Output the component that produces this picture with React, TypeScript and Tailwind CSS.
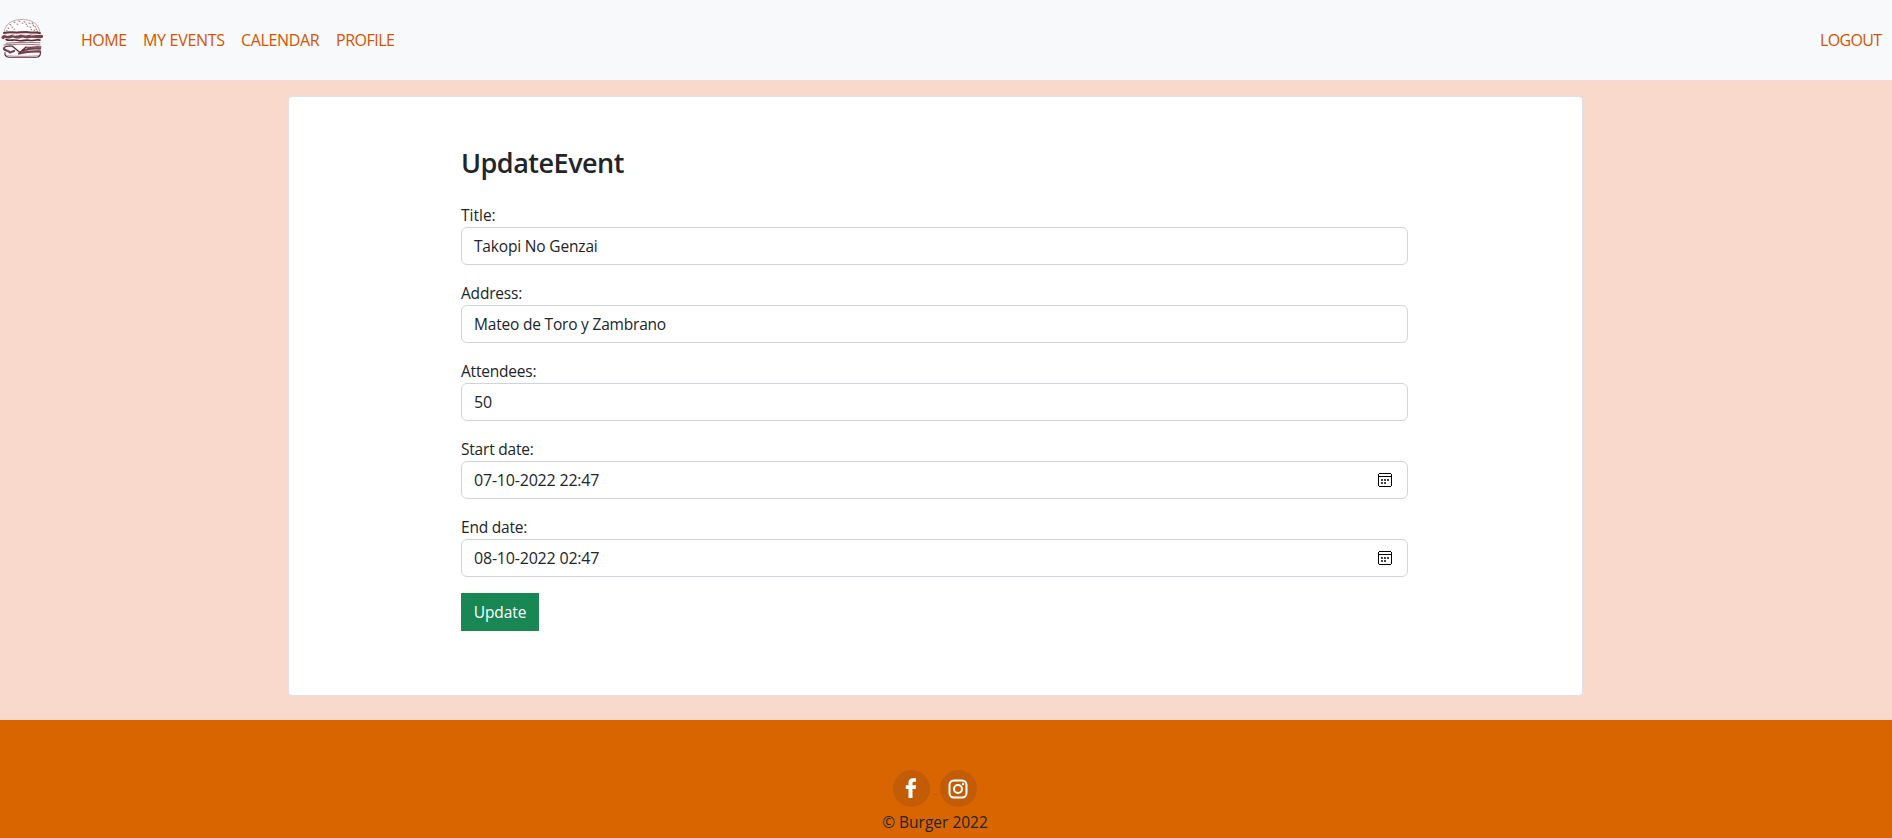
import React from "react";

const links = [
  { label: "HOME", box: "w-[62px]", text: "tracking-[-0.5px]" },
  { label: "MY EVENTS", box: "w-[98px]", text: "tracking-[-0.3px]" },
  { label: "CALENDAR", box: "w-[95px]", text: "tracking-[-0.35px]" },
  { label: "PROFILE", box: "w-[74px]", text: "tracking-[-0.5px]" },
];

const fields = [
  { label: "Title:", value: "Takopi No Genzai", labelText: "text-[15.5px]", valueText: "text-[15.5px] tracking-[-0.17px]", date: false },
  { label: "Address:", value: "Mateo de Toro y Zambrano", labelText: "text-[15.5px] tracking-[-0.2px]", valueText: "text-[15.5px] tracking-[-0.2px]", date: false },
  { label: "Attendees:", value: "50", labelText: "text-[15.5px] tracking-[-0.2px]", valueText: "tracking-[-0.2px]", date: false },
  { label: "Start date:", value: "07-10-2022 22:47", labelText: "text-[15.5px] tracking-[-0.2px]", valueText: "tracking-[-0.2px]", date: true },
  { label: "End date:", value: "08-10-2022 02:47", labelText: "text-[15.5px] tracking-[-0.2px]", valueText: "tracking-[-0.2px]", date: true },
];

function Burger() {
  return (
    <svg width="44" height="42" viewBox="0 0 44 42" fill="none" stroke="#5e2230" strokeLinecap="round">
      <path d="M4 14.500C5 6 12 1.500 22 1.500S39 6 40 14.500z" strokeWidth=".7" strokeOpacity=".55" fill="#fff" />
      <path d="M10 6.500l1 .5M14 4l1 .5M19 3l1 .4M24 3.500l1 .6M29 5l1 .6M33 7l.8.8M12 9l.8.3M17 6l.8.3M22 5l.8.3M27 8l.8.3M30 9l.8.4M36 11l.6.5M26 6l.6.4M8 10l.6.5M32 5l.8.5M35 8.500l.7.6M31 11.500l.7.3M37 13l.6.5M34 12l.6.4M14 11l.6.3M6.500 12.500l.6.4" strokeWidth="1.100" strokeOpacity=".6" />
      <path d="M4 15c5-1.500 9-.3 14-.6s9-.6 13 0 6-.4 9 .8" strokeWidth="2" strokeOpacity=".9" />
      <path d="M3 19.500c2-3 5 1 8-1s5 2 9 0 6 1.500 9 0 8 1 12.500 0" strokeWidth="3.200" strokeOpacity=".85" />
      <path d="M5 16.800l3 .6M13 17l3 .3M22 16.500l4 .6M31 17l4-.2" strokeWidth="1" stroke="#f2e6e8" />
      <path d="M6 21.500c4 2 7-.5 11 .8s9-.8 12 0 7-1 11-.2" strokeWidth="1.600" />
      <path d="M6 25.300c9-1 22-1.300 34-.5M4 27c10-1.200 24-1 36 0" strokeWidth=".8" strokeOpacity=".8" />
      <path d="M4 29.500c2-2 5-1 8-1.500l8 6.500 6-5.500c5 1 10-1 15 0" strokeWidth="1.200" />
      <path d="M4 31c2 2.500 4 1 6 3.500l4-1.500M23 32.500c5-2 11-2.500 17-2M19 35.500c8-2 14-2.500 21-2" strokeWidth="2.300" strokeOpacity=".85" />
      <path d="M5 34.500c-.5 3 1 4.500 4 4.700h27c3 0 4.500-2 4.500-4.700" strokeWidth="1.100" />
      <path d="M6.500 37.300c8 1.300 24 1.300 33 0" strokeWidth=".7" strokeOpacity=".5" />
    </svg>
  );
}

function CalendarIcon() {
  return (
    <svg width="14" height="14" viewBox="0 0 14 14" shapeRendering="crispEdges">
      <path fill="#000" d="M1 0h12v1H1zM0 1h1v12H0zM13 1h1v12h-1zM1 13h12v1H1zM1 3h12v1H1z" />
      <path fill="#444" d="M3 6h2v2H3zM6 6h2v2H6zM9 6h2v2H9zM3 9h2v2H3zM6 9h2v2H6z" />
    </svg>
  );
}

export default function App() {
  return (
    <div className="flex h-[838px] w-full flex-col overflow-hidden bg-[#f9d9cc] font-['Open_Sans','Noto_Sans',sans-serif] text-base leading-6 text-[#212529]">
      <header className="flex h-20 shrink-0 items-center bg-[#f8f9fb] pb-px text-[#d35400]">
        <div className="w-[81px] pb-px">
          <Burger />
        </div>
        <nav className="flex grow">
          {links.map((l) => (
            <a key={l.label} className={l.box + " whitespace-nowrap"}>
              <span className={l.text}>{l.label}</span>
            </a>
          ))}
        </nav>
        <a className="w-[72px] whitespace-nowrap tracking-[-0.65px]">LOGOUT</a>
      </header>

      <main className="h-[640px] shrink-0 pt-4">
        <section className="ml-[288px] h-[600px] w-[1295px] rounded border border-[#dee2e6] bg-white">
          <form className="ml-[172px] w-[947px] pt-[49px]">
            <h3 className="mb-[23px] h-[34px] text-[27px] leading-[34px] font-semibold">
              <span className="tracking-[-0.5px]">UpdateEvent</span>
            </h3>
            {fields.map((f) => (
              <div key={f.label} className="mb-4">
                <label className={"block h-6 " + f.labelText}>{f.label}</label>
                <div className="flex h-[38px] items-center justify-between rounded-md border border-[#ced4da] bg-white pr-[15px] pl-3">
                  <span className={f.valueText}>{f.value}</span>
                  {f.date && <CalendarIcon />}
                </div>
              </div>
            ))}
            <button type="button" className="h-[38px] w-[78px] bg-[#198754] text-[15.5px] tracking-[-0.1px] text-white">
              Update
            </button>
          </form>
        </section>
      </main>

      <footer className="h-[118px] shrink-0 bg-[#d96500] pt-[50px]">
        <div className="flex w-[1870px] flex-col items-center">
          <div className="flex items-end">
            <span className="flex size-[37px] items-center justify-center rounded-full bg-[#c25c06]">
              <svg className="-mt-px -ml-0.5" width="12" height="20" viewBox="0 0 12 20" fill="#fff">
                <path d="M3.500 20v-9H.8V7.300h2.700V4.800C3.500 1.800 5.100.2 8 .2h3v3.600H9.100C7.800 3.800 7.500 4.400 7.500 5.400v1.900h3.700L10.700 11H7.500v9z" />
              </svg>
            </span>
            <span className="mx-[3px] mb-3 h-px w-1 bg-[#b85a0a]" />
            <span className="flex size-[37px] items-center justify-center rounded-full bg-[#c25c06]">
              <svg className="-ml-0.5" width="20" height="20" viewBox="0 0 20 20" fill="none" stroke="#fff" strokeWidth="2">
                <rect x="1.500" y="1.500" width="17" height="17" rx="4.500" />
                <circle cx="10" cy="10" r="4" />
                <circle cx="15" cy="5" r="1.200" fill="#fff" stroke="none" />
              </svg>
            </span>
          </div>
          <p className="mt-[3px] text-[15.5px]">© Burger 2022</p>
        </div>
      </footer>
    </div>
  );
}
